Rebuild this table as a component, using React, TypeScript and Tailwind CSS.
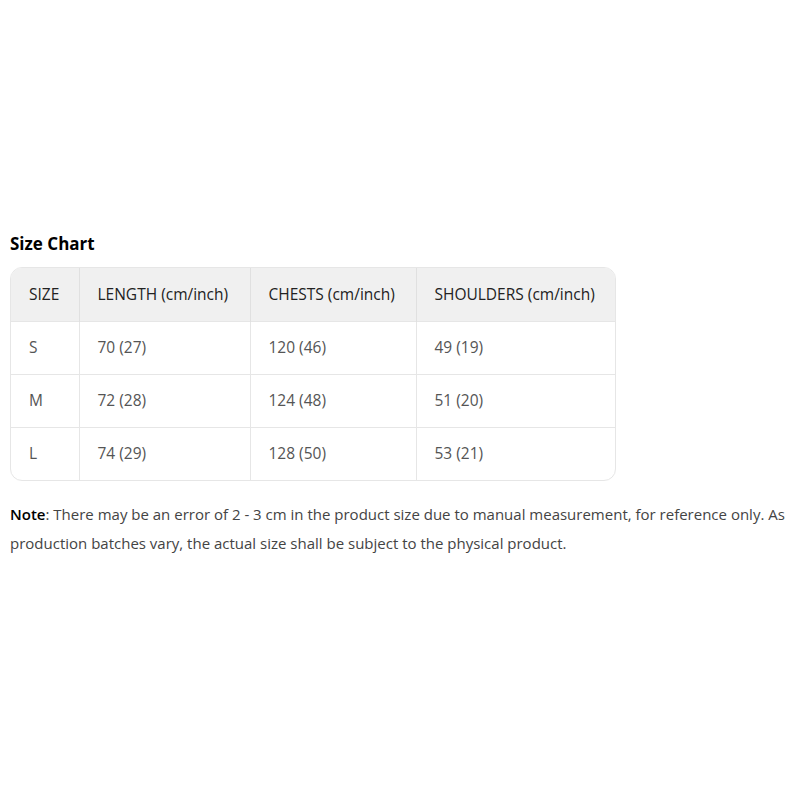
const rows = [
  ["S", "70 (27)", "120 (46)", "49 (19)"],
  ["M", "72 (28)", "124 (48)", "51 (20)"],
  ["L", "74 (29)", "128 (50)", "53 (21)"],
];

const headers = ["SIZE", "LENGTH (cm/inch)", "CHESTS (cm/inch)", "SHOULDERS (cm/inch)"];
const widths = ["w-[68px]", "w-[171px]", "w-[166px]", "w-[201px]"];

export default function App() {
  return (
    <div
      className="flex min-h-screen flex-col justify-center bg-white pl-[10px] pr-[2px] pb-[4px]"
      style={{ fontFamily: '"Open Sans", "Noto Sans", sans-serif' }}
    >
      <h2 className="text-[17px] font-bold leading-[24px] text-black">Size Chart</h2>

      <div className="mt-[11px] w-[606px] overflow-hidden rounded-[12px] border border-[#e6e6e6]">
        <table className="w-full table-fixed border-collapse text-[15.5px]">
          <thead>
            <tr className="h-[53px] bg-[#f0f0f0]">
              {headers.map((h, i) => (
                <th
                  key={h}
                  className={`${widths[i]} border-l border-[#e0e0e0] pl-[18px] text-left font-normal text-[#222] first:border-l-0`}
                >
                  {h}
                </th>
              ))}
            </tr>
          </thead>
          <tbody>
            {rows.map((r) => (
              <tr key={r[0]} className="h-[53px] border-t border-[#e6e6e6]">
                {r.map((c, i) => (
                  <td key={i} className="border-l border-[#e6e6e6] pl-[18px] text-[#555] first:border-l-0">
                    {c}
                  </td>
                ))}
              </tr>
            ))}
          </tbody>
        </table>
      </div>

      <p className="mt-[19px] text-[15px] leading-[29px] text-[#444]">
        <span className="font-semibold text-black">Note</span>: There may be an error of 2 - 3 cm in the product size due
        to manual measurement, for reference only. As production batches vary, the actual size shall be subject to the
        physical product.
      </p>
    </div>
  );
}
